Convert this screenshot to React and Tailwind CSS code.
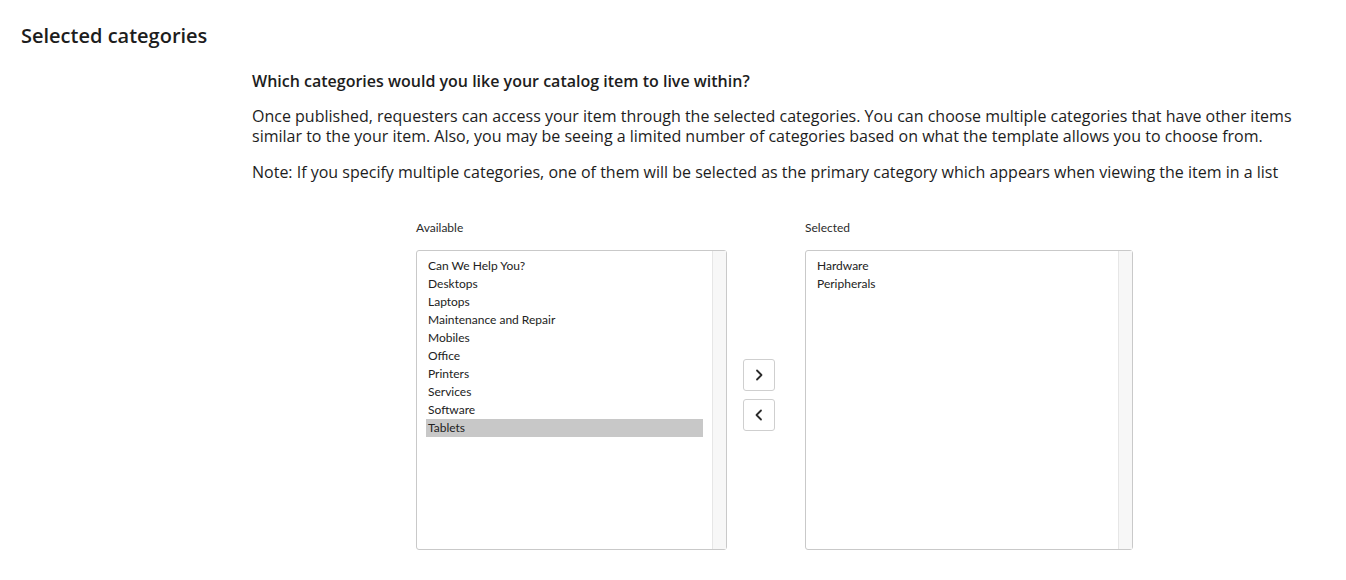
import React, { useState } from 'react';

const available = [
  'Can We Help You?',
  'Desktops',
  'Laptops',
  'Maintenance and Repair',
  'Mobiles',
  'Office',
  'Printers',
  'Services',
  'Software',
  'Tablets',
];

const chosen = ['Hardware', 'Peripherals'];

// Listbox with a fake scrollbar track on the right
const ListBox = ({ items, selected, width }) => (
  <div className={`flex h-[300px] ${width} rounded-[3px] border border-[#c9c9c9] bg-white`}>
    <ul className="flex-1 pl-[9px] pr-[9px] pt-[6px] font-['Lato','Liberation_Sans',sans-serif] text-[12px] leading-[18px] text-[#222]">
      {items.map((item) => (
        <li
          key={item}
          className={`px-[2px] ${item === selected ? 'bg-[#c8c8c8]' : ''}`}
        >
          {item}
        </li>
      ))}
    </ul>
    <div className="w-[14px] border-l border-[#e6e6e6] bg-[#f7f7f7]" />
  </div>
);

const ArrowButton = ({ dir }) => (
  <button className="flex h-[32px] w-[32px] items-center justify-center rounded-[3px] border border-[#cfcfcf] bg-white text-[#2b2b2b]">
    <svg width="10" height="14" viewBox="0 0 10 14" fill="none" stroke="currentColor" strokeWidth="1.8" strokeLinecap="round" strokeLinejoin="round">
      {dir === 'right' ? <path d="M3 2.5 L7.5 7 L3 11.5" /> : <path d="M7 2.5 L2.5 7 L7 11.5" />}
    </svg>
  </button>
);

export default function App() {
  const [sel] = useState('Tablets');

  return (
    <div className="min-h-screen bg-white font-['Open_Sans','Noto_Sans',sans-serif] text-[#1d1d1d]">
      <div className="px-[21px] pt-[22px]">
        <h1 className="text-[20px] font-semibold leading-[28px]">Selected categories</h1>
      </div>

      <div className="ml-[252px] mt-[21px] mr-[40px]">
        <h2 className="text-[16px] font-semibold leading-[20px]">
          Which categories would you like your catalog item to live within?
        </h2>
        <p className="mt-[15px] text-[16px] leading-[20px]">
          Once published, requesters can access your item through the selected categories. You can choose multiple categories that have other items similar to the your item. Also, you may be seeing a limited number of categories based on what the template allows you to choose from.
        </p>
        <p className="mt-[16px] text-[16px] leading-[20px]">
          Note: If you specify multiple categories, one of them will be selected as the primary category which appears when viewing the item in a list
        </p>

        <div className="mt-[37px] flex pl-[164px]">
          <div>
            <div className="mb-[14px] pt-[1px] font-['Lato','Liberation_Sans',sans-serif] text-[12px] leading-[16px] text-[#2b2b2b]">Available</div>
            <ListBox items={available} selected={sel} width="w-[311px]" />
          </div>

          <div className="ml-[16px] mt-[140px] flex flex-col gap-[8px]">
            <ArrowButton dir="right" />
            <ArrowButton dir="left" />
          </div>

          <div className="ml-[30px]">
            <div className="mb-[14px] pt-[1px] font-['Lato','Liberation_Sans',sans-serif] text-[12px] leading-[16px] text-[#2b2b2b]">Selected</div>
            <ListBox items={chosen} width="w-[328px]" />
          </div>
        </div>
      </div>
    </div>
  );
}
